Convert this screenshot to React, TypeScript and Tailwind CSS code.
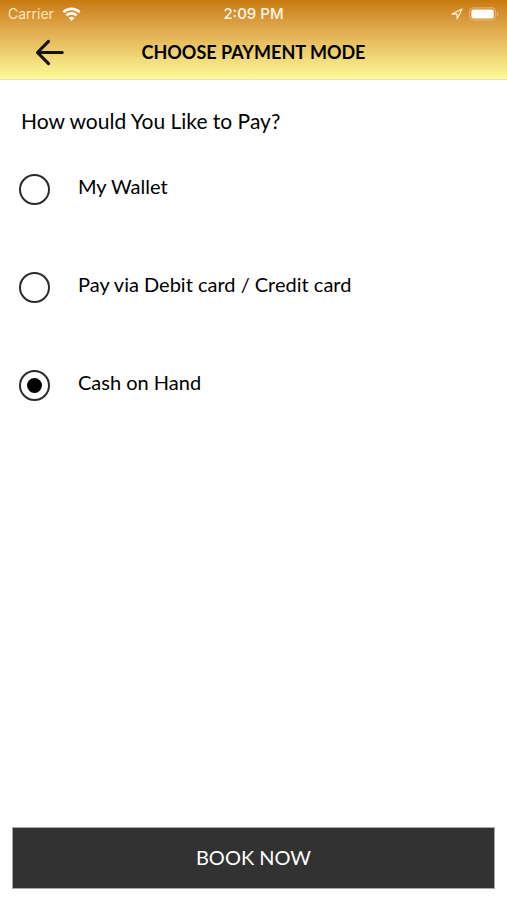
import React, { useState } from 'react';

interface PaymentMode {
  id: string;
  label: string;
}

const MODES: PaymentMode[] = [
  { id: 'wallet', label: 'My Wallet' },
  { id: 'card', label: 'Pay via Debit card / Credit card' },
  { id: 'cash', label: 'Cash on Hand' },
];

const WifiIcon = () => (
  <svg width="19" height="14" viewBox="0 0 18 14" fill="none" stroke="#fffaf0" strokeWidth="2.6">
    <path d="M0.9 5.2a11.6 11.6 0 0 1 16.2 0" />
    <path d="M3.9 8.5a7.3 7.3 0 0 1 10.2 0" />
    <path d="M9 14l-2.8-3a3.9 3.9 0 0 1 5.6 0z" fill="#fffaf0" stroke="none" />
  </svg>
);

const LocationIcon = () => (
  <svg width="12" height="12" viewBox="0 0 12 12" fill="none" stroke="#ffeccb" strokeWidth="1.3" strokeLinejoin="round">
    <path d="M11 1L1 6h4.8L6.2 10.8z" />
  </svg>
);

const BatteryIcon = () => (
  <svg width="30" height="14" viewBox="0 0 30 14">
    <rect x="0.6" y="0.9" width="26" height="12.2" rx="3.6" fill="none" stroke="#e3b272" strokeWidth="1.1" />
    <rect x="2.4" y="2.4" width="22.4" height="9.2" rx="2" fill="#ffffff" />
    <path d="M28 5v4c0.9-0.3 1.4-1.1 1.4-2s-0.5-1.7-1.4-2z" fill="#e3b272" />
  </svg>
);

const StatusBar = () => (
  <div className="grid h-7 grid-cols-3 items-center px-2 font-['Inter','Roboto',sans-serif] text-[#fff6e6]">
    <div className="flex items-center gap-2">
      <span className="text-sm text-[#ffe6bd]">Carrier</span>
      <WifiIcon />
    </div>
    <span className="text-center text-[15px] font-medium">2:09 PM</span>
    <div className="flex items-center justify-end gap-1.5">
      <LocationIcon />
      <BatteryIcon />
    </div>
  </div>
);

const App: React.FC = () => {
  const [selected, setSelected] = useState('cash');

  return (
    <div className="flex min-h-screen flex-col bg-white font-['Lato','Noto_Sans',sans-serif] text-black">
      <header className="border-b border-[#e6e3c8] bg-linear-to-b from-[#c97a0c] to-[#fdfb98]">
        <StatusBar />
        <div className="grid h-[51px] grid-cols-[64px_1fr_64px] items-center pb-[3px]">
          <button aria-label="Go back" className="flex justify-end">
            <svg width="29" height="27" viewBox="0 0 30 28" fill="none" stroke="#15120a" strokeWidth="3.2" strokeLinecap="round" strokeLinejoin="round">
              <path d="M28.2 14H2.5M14 2.5L2.5 14L14 25.5" />
            </svg>
          </button>
          <h1 className="text-center text-lg font-bold">CHOOSE PAYMENT MODE</h1>
        </div>
      </header>

      <main className="flex-1">
        <fieldset>
          <legend className="px-[21px] pt-[27px] text-[21px] leading-7">How would You Like to Pay?</legend>
          <div className="flex flex-col gap-[66px] px-[19px] pt-[38px]">
            {MODES.map(mode => (
              <label key={mode.id} className="flex h-8 items-center gap-7">
                <input
                  type="radio"
                  name="payment-mode"
                  value={mode.id}
                  checked={selected === mode.id}
                  onChange={() => setSelected(mode.id)}
                  className="size-[31px] shrink-0 appearance-none rounded-full border-2 border-[#2b2b2b] bg-white bg-clip-content p-[6px] checked:bg-black"
                />
                <span className="pb-[6px] text-xl leading-6">{mode.label}</span>
              </label>
            ))}
          </div>
        </fieldset>
      </main>

      <footer className="px-3 pb-[11px]">
        <button className="h-[62px] w-full border border-[#a8a8a8] bg-[#323232] pb-0.5 text-xl text-white">BOOK NOW</button>
      </footer>
    </div>
  );
};

export default App;
